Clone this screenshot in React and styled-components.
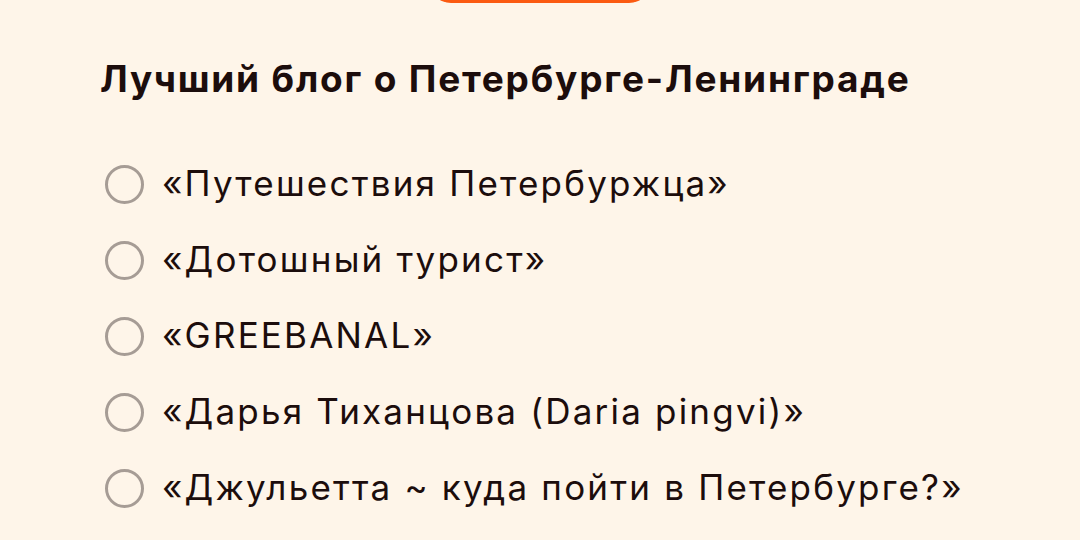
import styled, { createGlobalStyle } from "styled-components";

const GlobalStyle = createGlobalStyle`
  html, body {
    margin: 0;
    padding: 0;
    background: #fef5e9;
  }
  body {
    font-family: Inter, "Liberation Sans", Arial, sans-serif;
  }
`;

const options = [
  "«Путешествия Петербуржца»",
  "«Дотошный турист»",
  "«GREEBANAL»",
  "«Дарья Тиханцова (Daria pingvi)»",
  "«Джульетта ~ куда пойти в Петербурге?»",
];

const App = () => {
  return (
    <>
      <GlobalStyle />
      <Page>
        <TopButton />
        <Poll>
          <Title>Лучший блог о Петербурге-Ленинграде</Title>
          <List>
            {options.map(o => (
              <Option key={o}>
                <Radio />
                <Label>{o}</Label>
              </Option>
            ))}
          </List>
        </Poll>
      </Page>
    </>
  );
};

const Page = styled.div`
  width: 1080px;
  height: 540px;
  overflow: hidden;
  background: #fef5e9;
  display: flex;
  flex-direction: column;
  align-items: center;
`;

const TopButton = styled.div`
  width: 222px;
  height: 40px;
  margin-top: -37px;
  border-radius: 0 0 22px 22px;
  background: #fb5a11;
  flex-shrink: 0;
`;

const Poll = styled.div`
  align-self: stretch;
  padding: 52px 0 0 100px;
`;

const Title = styled.div`
  font-size: 37px;
  font-weight: 700;
  color: #1c0d0c;
  line-height: 48px;
  letter-spacing: 1.8px;
  white-space: nowrap;
`;

const List = styled.div`
  margin-top: 60px;
  display: flex;
  flex-direction: column;
  gap: 36px;
`;

const Option = styled.div`
  display: flex;
  align-items: center;
  height: 40px;
`;

const Radio = styled.div`
  width: 33px;
  height: 33px;
  border: 3px solid #a69c95;
  border-radius: 50%;
  margin-left: 5px;
  margin-right: 18px;
  margin-top: 3px;
  flex-shrink: 0;
`;

const Label = styled.div`
  font-size: 35px;
  color: #1c0d0c;
  line-height: 40px;
  letter-spacing: 2.2px;
  white-space: nowrap;
`;

export default App;
